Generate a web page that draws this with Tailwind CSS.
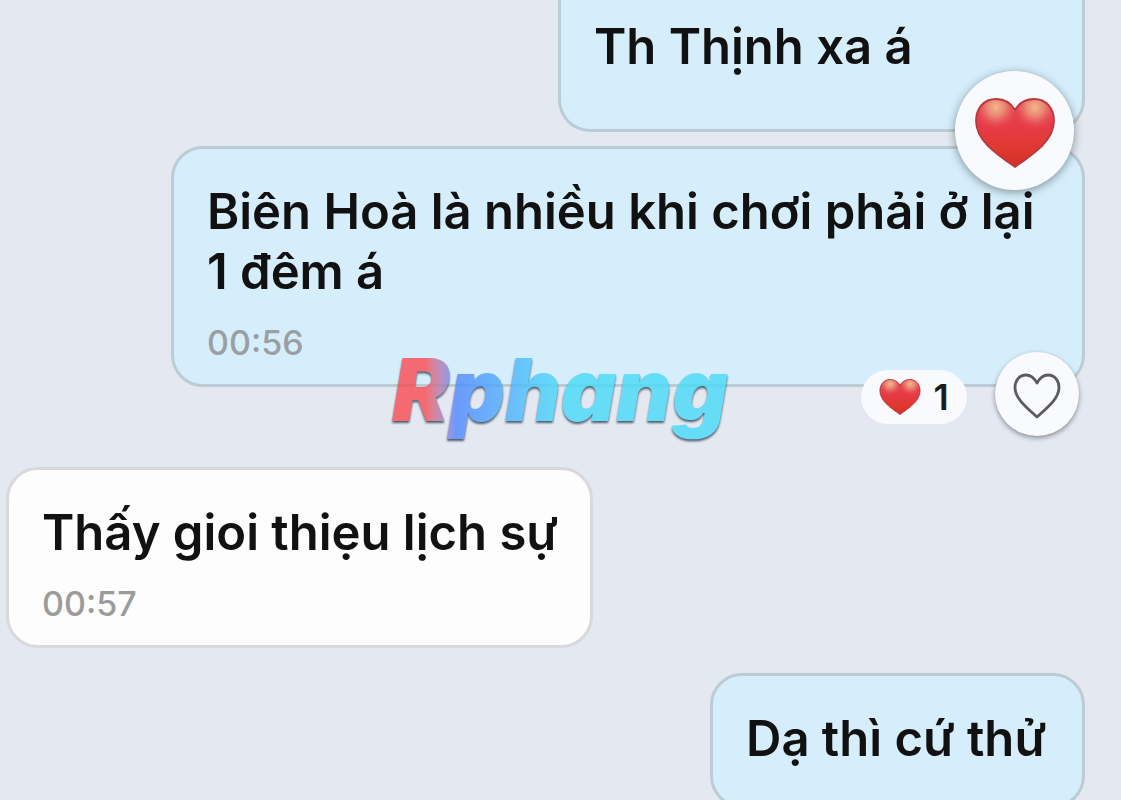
<!DOCTYPE html>
<html lang="vi">
<head>
    <meta charset="UTF-8">
    <meta name="viewport" content="width=device-width, initial-scale=1.0">
    <title>Chat</title>
    <script src="https://cdn.jsdelivr.net/npm/@tailwindcss/browser@4"></script>
</head>
<body class="bg-[#e3e8f1]">
    <!-- shared heart shape -->
    <svg class="absolute w-0 h-0" aria-hidden="true">
        <defs>
            <linearGradient id="heartFill" x1="0" y1="0" x2="0" y2="1">
                <stop offset="0" stop-color="#dc4a50"/>
                <stop offset="0.4" stop-color="#e63b48"/>
                <stop offset="0.75" stop-color="#df382f"/>
                <stop offset="1" stop-color="#cf3028"/>
            </linearGradient>
            <radialGradient id="heartShine" cx="0.5" cy="0.3" r="0.6">
                <stop offset="0" stop-color="#f2b98c"/>
                <stop offset="0.4" stop-color="#ee957c" stop-opacity="0.8"/>
                <stop offset="1" stop-color="#e84a50" stop-opacity="0"/>
            </radialGradient>
            <clipPath id="heartClip">
                <path d="M40 12C36 5 29 1 21 1C9 1 1 10 1 23C1 42 20 55 40 69C60 55 79 42 79 23C79 10 71 1 59 1C51 1 44 5 40 12Z"/>
            </clipPath>
            <symbol id="heart" viewBox="0 0 80 70">
                <path d="M40 12C36 5 29 1 21 1C9 1 1 10 1 23C1 42 20 55 40 69C60 55 79 42 79 23C79 10 71 1 59 1C51 1 44 5 40 12Z" fill="url(#heartFill)"/>
                <g clip-path="url(#heartClip)">
                    <ellipse cx="21" cy="17" rx="19" ry="19" fill="url(#heartShine)"/>
                    <ellipse cx="60" cy="17" rx="19" ry="19" fill="url(#heartShine)"/>
                </g>
                <path d="M40 12C36 5 29 1 21 1C9 1 1 10 1 23C1 42 20 55 40 69C60 55 79 42 79 23C79 10 71 1 59 1C51 1 44 5 40 12Z" fill="none" stroke="#b8383e" stroke-width="1.8" stroke-linejoin="round"/>
            </symbol>
        </defs>
    </svg>

    <main class="flex flex-col h-screen overflow-hidden pl-1.5 pr-9 font-['Inter',sans-serif] font-semibold text-[49px] leading-[60px] text-[#111]">
        <div class="relative shrink-0 self-end w-[527px] max-w-full bg-[#d6eefc] border-3 border-t-0 border-[#bbccd5] rounded-b-[32px] px-[33px] pt-[17px] pb-[52px]">
            <p>Th Thịnh xa á</p>
            <button type="button" aria-label="Thả tim" class="absolute z-10 right-2 -bottom-[61px] size-[119px] rounded-full bg-[#f9fafe] shadow-[0_2px_10px_rgba(0,0,0,0.4)] flex items-center justify-center">
                <svg class="w-20 h-[70px] mt-1"><use href="#heart"/></svg>
            </button>
        </div>

        <div class="relative shrink-0 self-end w-[914px] max-w-full mt-3.5 bg-[#d6eefc] border-3 border-[#bbccd5] rounded-[32px] px-[33px] pt-[33px] pb-[21px]">
            <p>Biên Hoà là nhiều khi chơi phải ở lại<br>1 đêm á</p>
            <time class="block mt-[21px] text-[34px] leading-10 font-medium text-[#999fa2]">00:56</time>
            <div class="absolute left-[218px] -bottom-14 text-[86px] leading-[100px] font-black italic opacity-80">
                <span class="bg-linear-to-r from-[#fa4a50] from-10% via-[#4f86ff] via-19% to-[#48daf8] to-50% bg-clip-text text-transparent drop-shadow-[0_2px_1px_rgba(20,40,60,0.9)]">Rphang</span>
            </div>
            <button type="button" aria-label="1 lượt thích" class="absolute right-[115px] -bottom-10 h-[54px] w-[106px] rounded-full bg-[#f8fafe] flex items-center justify-center gap-3 text-4xl text-[#1c1c1c]">
                <svg class="w-[42px] h-9"><use href="#heart"/></svg>
                <span>1</span>
            </button>
            <button type="button" aria-label="Thích" class="absolute right-[3px] -bottom-[52px] size-[84px] rounded-full bg-[#f9fafe] shadow-[0_2px_5px_rgba(0,0,0,0.4)] flex items-center justify-center">
                <svg class="w-12 h-[46px] mt-1" viewBox="0 0 48 46" fill="none" stroke="#5c5c5c" stroke-width="2.8" stroke-linejoin="round">
                    <path d="M24 10C21 4.500 17.500 2 13 2C6.500 2 2 7.500 2 14.500C2 25 12 33 24 44C36 33 46 25 46 14.500C46 7.500 41.500 2 35 2C30.500 2 27 4.500 24 10Z"/>
                </svg>
            </button>
        </div>

        <div class="shrink-0 self-start w-[587px] max-w-full mt-20 bg-[#fdfdfd] border-3 border-[#d7d9db] rounded-[32px] pl-[33px] pr-6 pt-[33px] pb-[21px]">
            <p>Thấy gioi thiẹu lịch sự</p>
            <time class="block mt-[21px] text-[34px] leading-10 font-medium text-[#9b9b9b]">00:57</time>
        </div>

        <div class="shrink-0 self-end w-[375px] max-w-full mt-[25px] bg-[#d6eefc] border-3 border-[#bbccd5] rounded-[32px] px-[33px] pt-[33px] pb-9">
            <p>Dạ thì cứ thử</p>
        </div>
    </main>
</body>
</html>
